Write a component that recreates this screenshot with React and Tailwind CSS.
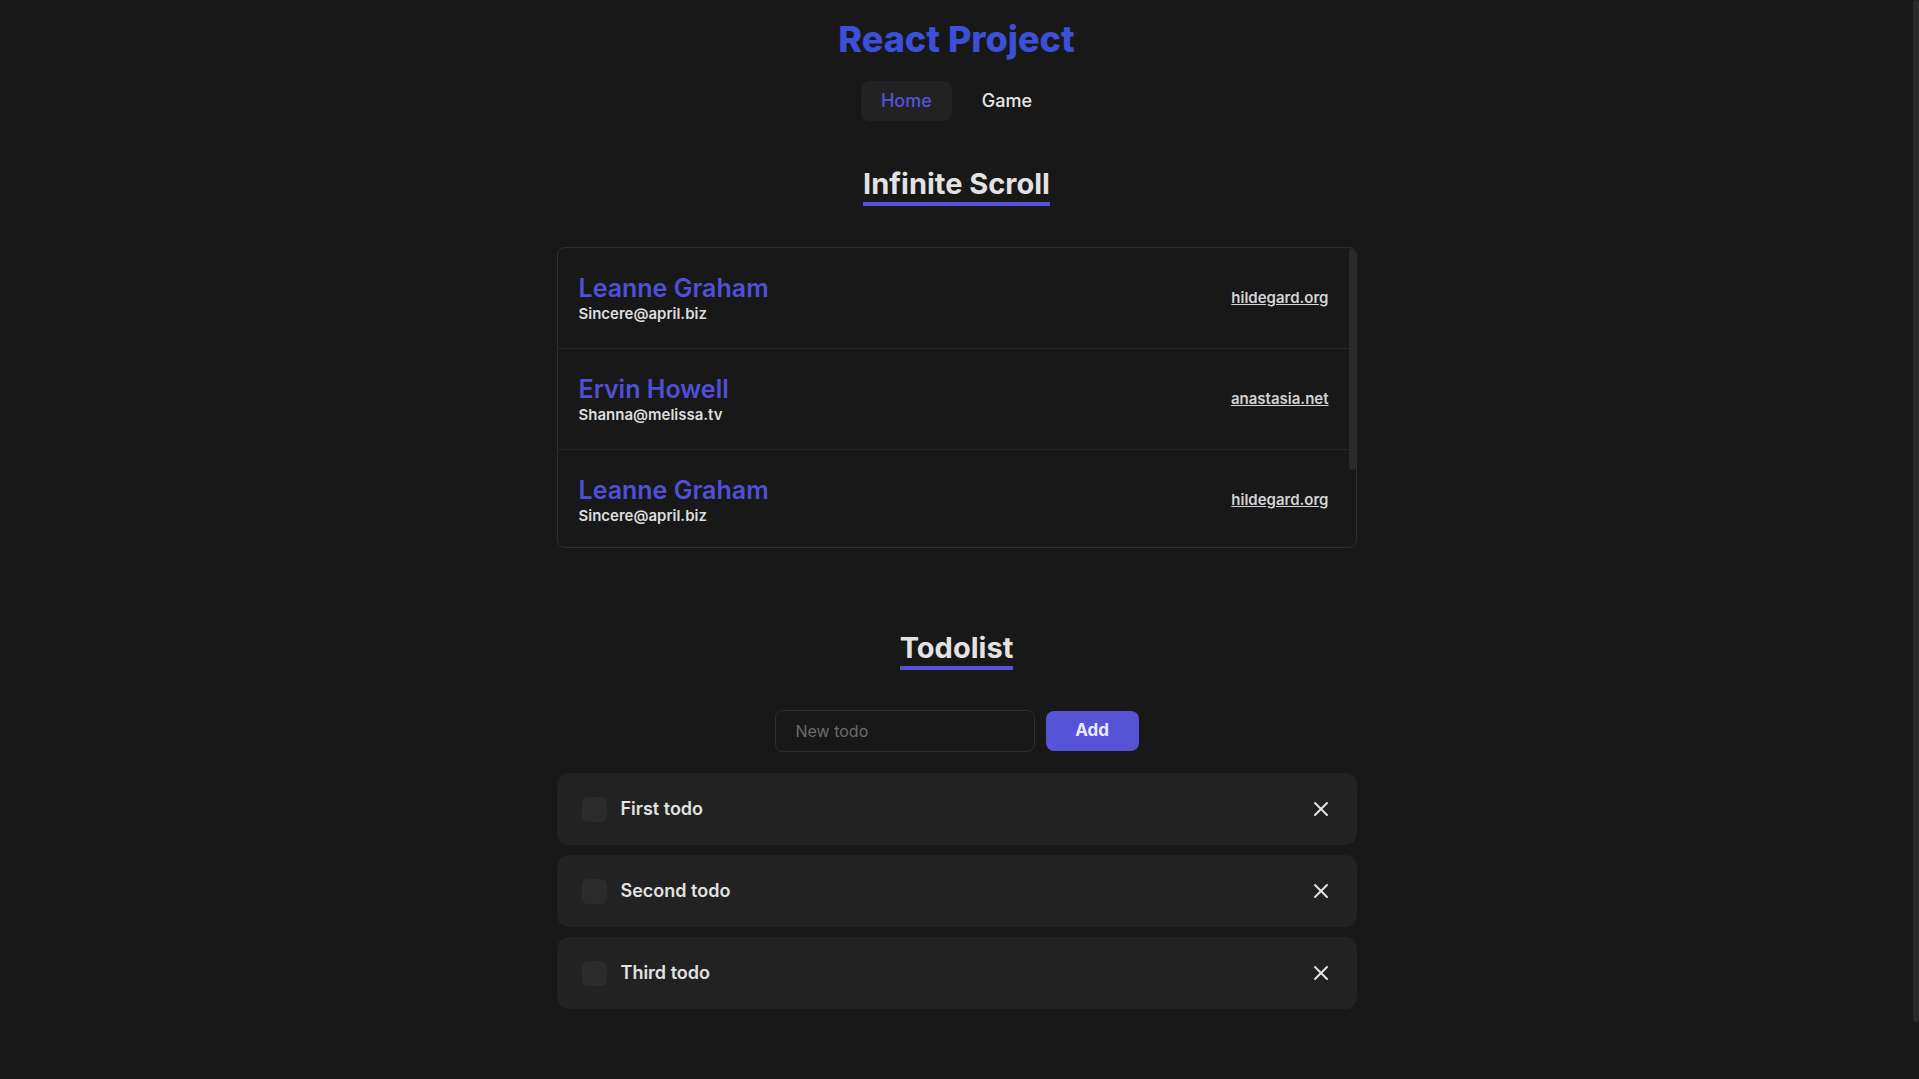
import React, { useState } from "react";
import { X } from "lucide-react";

const users = [
  { name: "Leanne Graham", email: "Sincere@april.biz", website: "hildegard.org" },
  { name: "Ervin Howell", email: "Shanna@melissa.tv", website: "anastasia.net" },
  { name: "Leanne Graham", email: "Sincere@april.biz", website: "hildegard.org" },
];

const SectionTitle = ({ children }) => (
  <h2 className="inline-block text-[29px] leading-9 font-bold text-[#e2e2e2] border-b-4 border-[#5652d6]">
    {children}
  </h2>
);

const App = () => {
  const [todos, setTodos] = useState([
    { id: 1, text: "First todo", done: false },
    { id: 2, text: "Second todo", done: false },
    { id: 3, text: "Third todo", done: false },
  ]);
  const [value, setValue] = useState("");

  const addTodo = () => {
    if (!value.trim()) return;
    setTodos([...todos, { id: Date.now(), text: value, done: false }]);
    setValue("");
  };

  const removeTodo = (id) => {
    setTodos(todos.filter((t) => t.id !== id));
  };

  return (
    <div
      className="flex h-screen overflow-hidden bg-[#181818] text-[#e2e2e2]"
      style={{ fontFamily: "Inter, 'Noto Sans', sans-serif" }}
    >
      <main className="flex-1 flex flex-col items-center pt-[19px] pb-[129px]">
        <h1 className="text-4xl font-extrabold text-[#3b4fd7]">React Project</h1>

        <nav className="mt-[22px] flex gap-2.5">
          <button className="px-5 py-1.5 text-lg font-medium rounded-lg bg-[#222222] text-[#5552d8]">
            Home
          </button>
          <button className="px-5 py-1.5 text-lg font-medium rounded-lg text-[#e8e8e8]">
            Game
          </button>
        </nav>

        <section className="mt-[45px] flex flex-col items-center">
          <SectionTitle>Infinite Scroll</SectionTitle>
          <div className="mt-[41px] w-[800px] h-[301px] flex rounded-lg border border-[#2e2e2e] overflow-hidden">
            <div className="flex-1">
              {users.map((user, index) => (
                <div
                  key={index}
                  className="flex items-center justify-between pl-[21px] pr-5 py-6 border-b border-[#262626] last:border-b-0"
                >
                  <div>
                    <div className="text-[25px] leading-8 font-semibold text-[#4f50d6]">{user.name}</div>
                    <div className="text-[15px] leading-5 font-semibold text-[#dedede]">{user.email}</div>
                  </div>
                  <a href="#" className="text-[15px] font-semibold text-[#d4d4d4] underline">
                    {user.website}
                  </a>
                </div>
              ))}
            </div>
            <div className="w-[7px] shrink-0">
              <div className="h-[222px] rounded-full bg-[#2a2a2a]" />
            </div>
          </div>
        </section>

        <section className="mt-[82px] flex flex-col items-center">
          <SectionTitle>Todolist</SectionTitle>
          <div className="mt-10 flex items-center gap-[11px]">
            <input
              value={value}
              onChange={(e) => setValue(e.target.value)}
              placeholder="New todo"
              className="w-[260px] h-[42px] px-5 rounded-lg border border-[#2e2e2e] bg-transparent text-base text-[#e2e2e2] placeholder:text-[#6b6b6b] outline-none"
            />
            <button
              onClick={addTodo}
              className="w-[93px] h-10 rounded-lg bg-[#5553d6] text-[17px] font-bold text-[#e8e8ff]"
            >
              Add
            </button>
          </div>
          <ul className="mt-[21px] w-[800px] flex flex-col gap-2.5">
            {todos.map((todo) => (
              <li
                key={todo.id}
                className="flex items-center justify-between pl-[25px] pr-5 py-5 rounded-xl bg-[#222222]"
              >
                <div className="flex items-center gap-3.5">
                  <span className="w-[25px] h-[25px] rounded-md bg-[#2b2b2b]" />
                  <span className="text-lg font-semibold text-[#e2e2e2]">{todo.text}</span>
                </div>
                <button onClick={() => removeTodo(todo.id)} className="p-1 text-[#e4e4e4]">
                  <X size={24} strokeWidth={2} />
                </button>
              </li>
            ))}
          </ul>
        </section>
      </main>
      <div className="w-1.5 shrink-0">
        <div className="h-[1022px] rounded-full bg-[#2a2a2a]" />
      </div>
    </div>
  );
};

export default App;
